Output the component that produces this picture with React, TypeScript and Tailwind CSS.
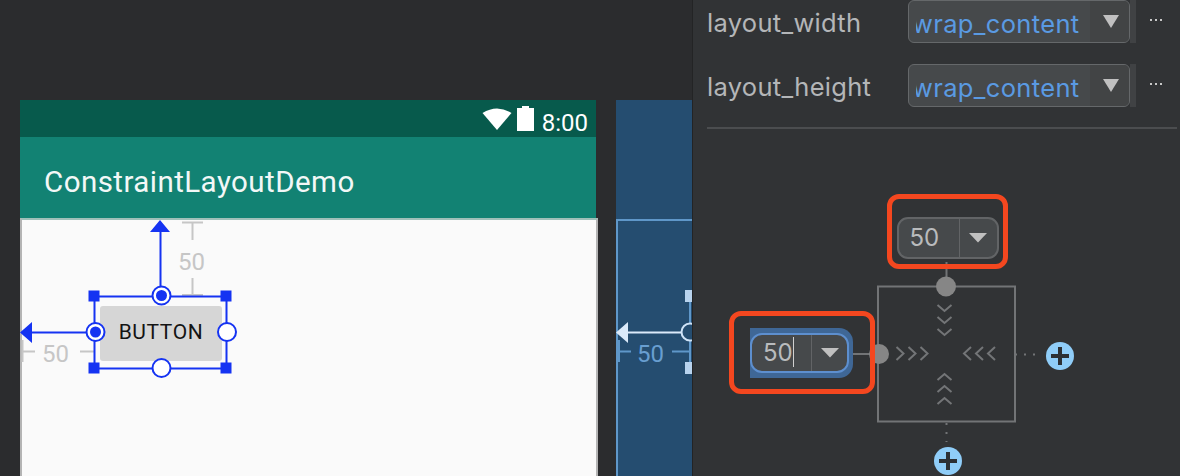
import React from 'react';

const uiFont = "font-['Inter','Liberation_Sans',sans-serif]";

const Caret = () => (
  <svg width="18" height="10" viewBox="0 0 18 10">
    <path d="M0 0 H18 L9 9.5 Z" fill="#c0c0c0" />
  </svg>
);

const ComboCaret = () => (
  <svg width="16" height="13" viewBox="0 0 16 13">
    <path d="M0 0 H16 L8 13 Z" fill="#c0c0c0" />
  </svg>
);

const PropertyRow = ({ label }: { label: string }) => (
  <div className="flex h-[43px] items-center">
    <span className={`w-[215px] shrink-0 pl-[14px] pt-[4px] text-[25.500px] tracking-[0.3px] text-[#b4b6b8] ${uiFont}`}>{label}</span>
    <div className="flex h-[43px] w-[222px] overflow-hidden rounded-[6px] border border-[#65686a] bg-[#46494b] pl-[7px]">
      <div className="w-[174px] overflow-hidden">
        <span className={`-ml-[4px] block whitespace-nowrap pt-[2px] text-[25.500px] leading-[41px] tracking-[0.35px] text-[#5a9ae2] ${uiFont}`}>wrap_content</span>
      </div>
      <div className="flex flex-1 items-center justify-center bg-[#424445] pl-[2px]">
        <ComboCaret />
      </div>
    </div>
    <div className="flex w-[6px] self-stretch bg-[#404244]" />
    <span className="ml-[14px] -mt-[3px] flex gap-[3px]">
      <i className="h-[2px] w-[2px] bg-[#c8c8c8]" />
      <i className="h-[2px] w-[2px] bg-[#c8c8c8]" />
      <i className="h-[2px] w-[2px] bg-[#c8c8c8]" />
    </span>
  </div>
);

const Chevrons = () => {
  const c = '#737577';
  return (
    <g fill="none" stroke={c} strokeWidth={2}>
      {[307, 319, 331].map((y) => (
        <path key={`d${y}`} d={`M937.500 ${y - 2} L944.500 ${y + 4} L951.500 ${y - 2}`} />
      ))}
      {[372, 384, 396].map((y) => (
        <path key={`u${y}`} d={`M937.500 ${y + 8} L944.500 ${y + 2} L951.500 ${y + 8}`} />
      ))}
      {[897, 909, 921].map((x) => (
        <path key={`r${x}`} d={`M${x - 0.5} 347 L${x + 6.500} 353.500 L${x - 0.5} 360`} />
      ))}
      {[963, 975, 987].map((x) => (
        <path key={`l${x}`} d={`M${x + 8} 347 L${x + 1} 353.500 L${x + 8} 360`} />
      ))}
    </g>
  );
};

const PlusIcon = ({ cx, cy }: { cx: number; cy: number }) => (
  <g>
    <circle cx={cx} cy={cy} r="14" fill="#8fcdf8" />
    <path d={`M${cx - 9} ${cy} H${cx + 9} M${cx} ${cy - 9} V${cy + 9}`} stroke="#2c3034" strokeWidth="4" />
  </g>
);

const ConstraintWidget = () => (
  <div className="relative h-[347px] w-[487px]">
    <svg width="487" height="347" viewBox="693 129 487 347" className="absolute inset-0">
      <rect x="878" y="286.500" width="137" height="135" fill="none" stroke="#727476" strokeWidth="2" />
      <path d="M946.500 262 V278 M853 354 H870" stroke="#727476" strokeWidth="2" />
      <circle cx="946" cy="286.500" r="10" fill="#868686" />
      <circle cx="879" cy="354" r="10" fill="#868686" />
      <path d="M1015 354.500 H1035" stroke="#727476" strokeWidth="2" strokeDasharray="2 7" />
      <path d="M946.500 423 V442" stroke="#727476" strokeWidth="2" strokeDasharray="2 7" />
      <Chevrons />
      <PlusIcon cx={1060} cy={356} />
      <PlusIcon cx={948} cy={461} />
    </svg>

    <div className="absolute left-[194px] top-[65px] flex h-[75px] w-[121px] items-start justify-center rounded-[12px] border-[5px] border-[#f4471f] pt-[18px]">
      <div className="flex h-[42px] w-[102px] items-center rounded-[11px] border-2 border-[#626466] bg-[#46494b]">
        <span className={`w-[60px] pl-[11px] text-[24px] leading-none text-[#b9bbbd] ${uiFont}`}>50</span>
        <div className="flex h-full flex-1 items-center justify-center border-l border-[#626466]">
          <Caret />
        </div>
      </div>
    </div>

    <div className="absolute left-[36px] top-[182px] flex h-[83px] w-[146px] items-center rounded-[12px] border-[5px] border-[#f4471f] pl-[16px]">
      <div className="flex h-[50px] w-[103px] items-center rounded-r-[14px] bg-[#3f6796] pr-[4px]">
        <div className="flex h-[40px] w-full items-center rounded-[12px] border-2 border-[#5d8fcf] bg-[#46494b]">
          <span className={`relative w-[59px] pl-[11px] text-[24px] leading-none text-[#b9bbbd] ${uiFont}`}>
            50
            <i className="absolute left-[41px] -top-[4px] h-[30px] w-[1px] bg-[#d0d0d0]" />
          </span>
          <div className="flex h-full flex-1 items-center justify-center border-l border-[#626466]">
            <Caret />
          </div>
        </div>
      </div>
    </div>
  </div>
);

const Handle = ({ cx, cy, dot, color = '#1533f2' }: { cx: number; cy: number; dot?: boolean; color?: string }) => (
  <g>
    <circle cx={cx} cy={cy} r="9" fill="#fff" stroke={color} strokeWidth="2" />
    {dot && <circle cx={cx} cy={cy} r="5.500" fill={color} />}
  </g>
);

const Overlay = () => {
  const blue = '#1533f2';
  const grey = '#c6c6c6';
  const sq = [
    [94, 296],
    [226, 296],
    [94, 368],
    [226, 368],
  ];
  return (
    <svg width="692" height="476" viewBox="0 0 692 476" className="absolute inset-0">
      {/* dimension ticks */}
      <path d="M182 222.500 H203 M192.500 222 V240 M192.500 278 V296 M182 295 H203" stroke={grey} strokeWidth="2" fill="none" />
      <path d="M22.500 340 V362 M22 351.500 H35 M80 351.500 H95" stroke={grey} strokeWidth="2" fill="none" />

      {/* selection box */}
      <rect x="94.500" y="296.500" width="132" height="72" fill="none" stroke={blue} strokeWidth="2" />
      <path d="M160.500 230 V286 M30 332.500 H87" stroke={blue} strokeWidth="2" />
      <path d="M160 220 L170 232 H150 Z M20 332.500 L32 322 V343 Z" fill={blue} />
      {sq.map(([x, y]) => (
        <rect key={`${x}-${y}`} x={x - 5.500} y={y - 5.500} width="11" height="11" fill={blue} />
      ))}
      <Handle cx={161.500} cy={295.500} dot />
      <Handle cx={95.500} cy={332} dot />
      <Handle cx={227} cy={332} />
      <Handle cx={161.500} cy={368} />

      {/* blueprint copy, cut off by the panel */}
      <path d="M628 332.500 H684" stroke="#dbeafa" strokeWidth="2" fill="none" />
      <path d="M616 332.500 L628 322 V343 Z" fill="#dbeafa" />
      <path d="M619 340 V362 M619 351.500 H631 M672 351.500 H690 M690 296 V368" stroke="#5f97c9" strokeWidth="2" fill="none" />
      <circle cx="690" cy="332" r="8.500" fill="#254d70" stroke="#cfe3f7" strokeWidth="2" />
      <rect x="685" y="290" width="8" height="12" fill="#b8d3ee" />
      <rect x="685" y="362" width="8" height="12" fill="#b8d3ee" />
    </svg>
  );
};

export default function App() {
  return (
    <div className="flex h-[476px] w-[1180px] overflow-hidden bg-[#313335]">
      <div className="relative flex h-full w-[692px] shrink-0 gap-[20px] overflow-hidden bg-[#2b2c2e] pl-[20px] pt-[100px]">
        <div className="flex h-[376px] w-[576px] shrink-0 flex-col">
          <div className="flex h-[37px] items-center justify-end bg-[#075a4c] pr-[8px] font-['Roboto',sans-serif] text-[24px] text-white">
            <svg width="30" height="24" viewBox="0 0 30 24">
              <path d="M0.500 6 Q15 -3 29.500 6 L15 23 Z" fill="#fff" />
            </svg>
            <svg width="17" height="25" viewBox="0 0 17 25" className="ml-[5px]">
              <path d="M5 0 H12 V2 H17 V25 H0 V2 H5 Z" fill="#fff" />
            </svg>
            <span className="ml-[8px] pt-[9px] leading-none">8:00</span>
          </div>
          <div className="flex h-[81px] items-center bg-[#128273] pl-[24px] pt-[9px]">
            <span className="font-['Roboto',sans-serif] text-[29.500px] font-normal tracking-[0.45px] text-[#f2f8f7]">ConstraintLayoutDemo</span>
          </div>
          <div className="-mr-[2px] flex-1 border-x-2 border-t-2 border-x-[#b4b4b4] border-t-[#9fc0b9] bg-[#fafafa]" />
        </div>
        <div className="flex h-[376px] w-[76px] shrink-0 flex-col bg-[#254d70]">
          <div className="mt-[119px] flex-1 border-l-2 border-t-2 border-[#5f97c9]" />
        </div>

        {/* selected button on the design surface, handles sit over it */}
        <div className="absolute left-[100px] top-[306px] flex h-[55px] w-[122px] items-center justify-center rounded-[3px] bg-[#d6d6d6] pb-[1px] font-['Roboto',sans-serif] text-[21px] font-normal tracking-[0.6px] text-[#141414]">
          BUTTON
        </div>
        <Overlay />

        <span className="absolute left-[178px] top-[248px] font-['Roboto',sans-serif] text-[24px] leading-[28px] text-[#c6c6c6]">50</span>
        <span className="absolute left-[42px] top-[340px] font-['Roboto',sans-serif] text-[24px] leading-[28px] text-[#c6c6c6]">50</span>
        <span className="absolute left-[637px] top-[340px] font-['Roboto',sans-serif] text-[24px] leading-[28px] text-[#689ed0]">50</span>
      </div>

      <div className="flex h-full flex-1 flex-col border-l border-[#232425]">
        <div className="flex flex-col gap-[21px]">
          <PropertyRow label="layout_width" />
          <PropertyRow label="layout_height" />
        </div>
        <div className="ml-[14px] mr-[3px] mt-[20px] h-[2px] bg-[#4b4d4f]" />
        <ConstraintWidget />
      </div>
    </div>
  );
}
